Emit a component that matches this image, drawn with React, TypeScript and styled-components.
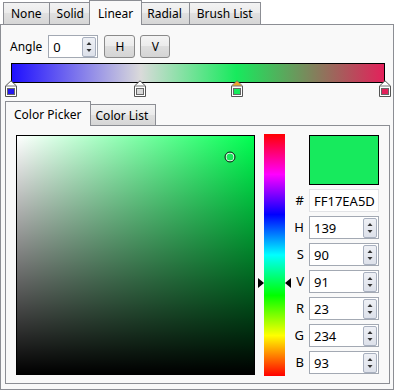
import React from "react";
import styled, { createGlobalStyle } from "styled-components";

const GlobalStyle = createGlobalStyle`
  html, body { margin: 0; padding: 0; background: #fff; }
  body {
    font-family: "Noto Sans", "Open Sans", sans-serif;
    font-size: 12px;
    color: #000;
  }
  * { box-sizing: border-box; }
`;

const PANEL_BG = "#f9f9f9";
const BORDER = "#8c8e94";

const Root = styled.div`
  width: 396px;
  height: 390px;
  display: flex;
  flex-direction: column;
`;

const TabStrip = styled.div<{ $inset: number; $top?: number }>`
  display: flex;
  align-items: flex-end;
  height: 24px;
  padding-left: ${(p) => p.$inset}px;
  margin-top: ${(p) => p.$top || 0}px;
  position: relative;
  z-index: 1;
`;

const Tab = styled.div<{ $active?: boolean; $short?: number }>`
  height: ${(p) => (p.$active ? 25 : p.$short || 22)}px;
  margin-bottom: ${(p) => (p.$active ? -1 : 0)}px;
  margin-right: ${(p) => (p.$active ? -3 : -1)}px;
  margin-left: ${(p) => (p.$active ? -2 : 0)}px;
  padding: 0 ${(p) => (p.$active ? 8 : 7)}px;
  border: 1px solid ${BORDER};
  border-bottom: none;
  display: flex;
  align-items: center;
  white-space: nowrap;
  position: relative;
  z-index: ${(p) => (p.$active ? 2 : 1)};
  background: ${(p) =>
    p.$active ? PANEL_BG : "linear-gradient(#f3f3f3, #ebebeb 50%, #e0e0e0 50%, #d6d6d6)"};
  &:first-child { margin-left: 0; }
`;

const Panel = styled.div`
  width: 394px;
  height: 366px;
  border: 1px solid ${BORDER};
  background: ${PANEL_BG};
  display: flex;
  flex-direction: column;
`;

const AngleRow = styled.div`
  display: flex;
  align-items: center;
  height: 23px;
  margin-top: 10px;
  padding-left: 9px;
`;

const AngleLabel = styled.span`
  margin-right: 6px;
`;

const NumberBox = styled.div<{ $w: number; $light?: boolean }>`
  width: ${(p) => p.$w}px;
  height: 23px;
  border: 1px solid ${(p) => (p.$light ? "#e2e3e6" : "#a3a9b3")};
  background: #fff;
  display: flex;
  align-items: center;
  justify-content: space-between;
  padding: 0 1px 0 4px;
  font-size: 13px;
`;

const SpinBox = styled.div`
  width: 14px;
  height: 20px;
  border: 1px solid #a8b0bf;
  border-radius: 2px;
  background: linear-gradient(#eef0f5, #dde1ea);
  display: flex;
  align-items: center;
  justify-content: center;
`;

const Button = styled.div<{ $w: number }>`
  width: ${(p) => p.$w}px;
  height: 23px;
  margin-left: ${(p) => (p.$w > 30 ? 6 : 5)}px;
  border: 1px solid #8a8a8a;
  border-radius: 3px;
  background: linear-gradient(#f4f4f4, #ebebeb 50%, #dedede 50%, #d4d4d4);
  display: flex;
  align-items: center;
  justify-content: center;
`;

const GradientBar = styled.div`
  width: 374px;
  height: 20px;
  margin: 5px 0 0 10px;
  border: 1px solid #000;
  background: linear-gradient(to right, #1f10ff 0%, #dadada 34.6%, #17ea5d 60.3%, #e3215b 100%);
`;

const StopRow = styled.div`
  position: relative;
  width: 374px;
  height: 17px;
  margin: -3px 0 0 10px;
`;

const StopMark = styled.div`
  position: absolute;
  top: 0;
  width: 12px;
  height: 17px;
  transform: translateX(-50%);
`;

const InnerPanel = styled.div`
  width: 385px;
  height: 259px;
  margin-left: 4px;
  border: 1px solid ${BORDER};
  background: ${PANEL_BG};
  padding: 9px 0 0 10px;
  display: flex;
  align-items: flex-start;
`;

const ColorArea = styled.div<{ $hue: string }>`
  position: relative;
  width: 239px;
  height: 240px;
  border: 1px solid #000;
  background: linear-gradient(to top, #000, rgba(0, 0, 0, 0)),
    linear-gradient(to right, #fff, ${(p) => p.$hue});
`;

const Picker = styled.div`
  position: absolute;
  width: 11px;
  height: 11px;
  border-radius: 50%;
  border: 1px solid #1a1a1a;
  box-shadow: inset 0 0 0 1px #fff;
  transform: translate(-50%, -50%);
`;

const HueWrap = styled.div`
  position: relative;
  width: 21px;
  height: 242px;
  margin: -1px 0 0 9px;
  background: linear-gradient(#ff0000, #ff00ff 16.7%, #0000ff 33.3%, #00ffff 50%, #00ff00 66.7%, #ffff00 83.3%, #ff0000);
`;

const HueArrow = styled.div<{ $side: "left" | "right" }>`
  position: absolute;
  ${(p) => p.$side}: -6px;
  width: 0;
  height: 0;
  border-top: 5px solid transparent;
  border-bottom: 5px solid transparent;
  ${(p) => (p.$side === "left" ? "border-left: 6px solid #000;" : "border-right: 6px solid #000;")}
  transform: translateY(-50%);
`;

const Fields = styled.div`
  display: grid;
  grid-template-columns: 15px 70px;
  grid-template-rows: 50px;
  grid-auto-rows: 23px;
  row-gap: 4px;
  margin-left: 9px;
`;

const Swatch = styled.div<{ $color: string }>`
  grid-column: 2;
  border: 1px solid #000;
  background: ${(p) => p.$color};
`;

const FieldLabel = styled.div`
  font-size: 13px;
  text-align: right;
  padding-right: 5px;
  line-height: 23px;
`;

function Spinner() {
  return (
    <SpinBox>
      <svg width="8" height="14" viewBox="0 0 8 14">
        <polygon points="1.5,5 6.5,5 4,2" fill="#333" />
        <polygon points="1.5,9 6.5,9 4,12" fill="#333" />
      </svg>
    </SpinBox>
  );
}

function Marker({ color, active }: { color: string; active?: boolean }) {
  return (
    <svg width="12" height="17" viewBox="0 0 12 17">
      <path d="M0.5 16.5 V6 L6 0.8 L11.5 6 V16.5 Z" fill="#fff" stroke="#555" />
      {active && <path d="M1 6 L6 1.3 L11 6 Z" fill="#f0a428" />}
      <line x1="0.5" y1="6" x2="11.5" y2="6" stroke="#777" />
      <rect x="2.5" y="8.5" width="7" height="6" fill={color} stroke="#666" />
    </svg>
  );
}

const stops = [
  { pos: 0, color: "#2418ee" },
  { pos: 34.6, color: "#d9d9d9" },
  { pos: 60.3, color: "#17ea5d", active: true },
  { pos: 100, color: "#e3215b" },
];

const fields = [
  ["H", "139"],
  ["S", "90"],
  ["V", "91"],
  ["R", "23"],
  ["G", "234"],
  ["B", "93"],
];

export default function App() {
  const hue = 139;
  const sat = 90;
  const val = 91;
  return (
    <Root>
      <GlobalStyle />
      <TabStrip $inset={3}>
        <Tab>None</Tab>
        <Tab>Solid</Tab>
        <Tab $active>Linear</Tab>
        <Tab>Radial</Tab>
        <Tab>Brush List</Tab>
      </TabStrip>
      <Panel>
        <AngleRow>
          <AngleLabel>Angle</AngleLabel>
          <NumberBox $w={50}>
            0
            <Spinner />
          </NumberBox>
          <Button $w={31}>H</Button>
          <Button $w={30}>V</Button>
        </AngleRow>
        <GradientBar />
        <StopRow>
          {stops.map((s) => (
            <StopMark key={s.pos} style={{ left: `${s.pos}%` }}>
              <Marker color={s.color} active={s.active} />
            </StopMark>
          ))}
        </StopRow>
        <TabStrip $inset={4} $top={4}>
          <Tab $active>Color Picker</Tab>
          <Tab $short={21}>Color List</Tab>
        </TabStrip>
        <InnerPanel>
          <ColorArea $hue="#00ff51">
            <Picker style={{ left: `${sat}%`, top: `${100 - val}%` }} />
          </ColorArea>
          <HueWrap>
            <HueArrow $side="left" style={{ top: `${((360 - hue) / 360) * 100}%` }} />
            <HueArrow $side="right" style={{ top: `${((360 - hue) / 360) * 100}%` }} />
          </HueWrap>
          <Fields>
            <Swatch $color="#17ea5d" />
            <FieldLabel>#</FieldLabel>
            <NumberBox $w={70} $light>
              FF17EA5D
            </NumberBox>
            {fields.map(([k, v]) => (
              <React.Fragment key={k}>
                <FieldLabel>{k}</FieldLabel>
                <NumberBox $w={70}>
                  {v}
                  <Spinner />
                </NumberBox>
              </React.Fragment>
            ))}
          </Fields>
        </InnerPanel>
      </Panel>
    </Root>
  );
}
